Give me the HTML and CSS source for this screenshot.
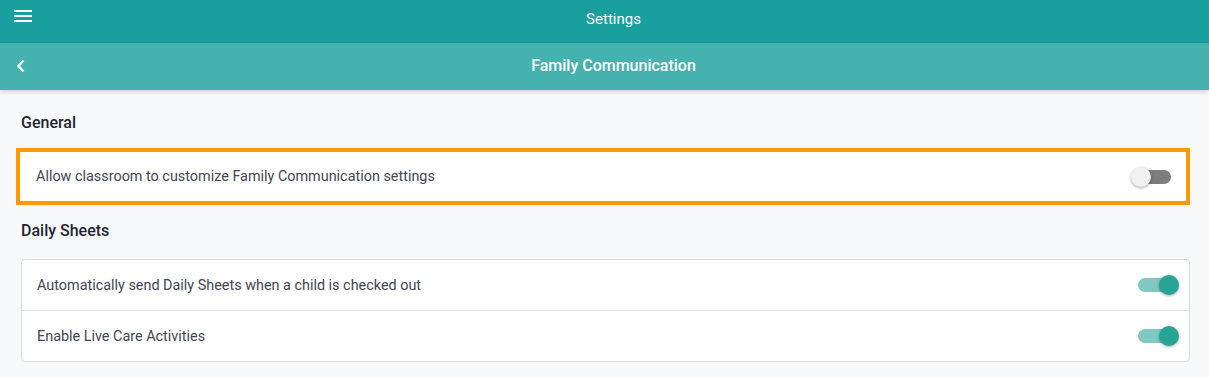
FILE: index.html
```html
<!DOCTYPE html>
<html lang="en">

<head>
  <meta charset="UTF-8">
  <meta name="viewport" content="width=device-width, initial-scale=1.0">
  <title>Settings</title>
  <link rel="stylesheet" href="styles.css">
</head>

<body>
  <header class="topbar">
    <button class="icon-btn menu-btn" aria-label="Menu">
      <svg width="18" height="14" viewBox="0 0 18 14">
        <rect x="0" y="1" width="18" height="2" fill="#fff"/>
        <rect x="0" y="6" width="18" height="2" fill="#fff"/>
        <rect x="0" y="11" width="18" height="2" fill="#fff"/>
      </svg>
    </button>
    <div class="topbar-title">Settings</div>
  </header>

  <div class="subbar">
    <button class="icon-btn back-btn" aria-label="Back">
      <svg width="10" height="14" viewBox="0 0 10 14">
        <path d="M7.5 1.5 L2.5 7 L7.5 12.5" fill="none" stroke="#fff" stroke-width="2.4"/>
      </svg>
    </button>
    <div class="subbar-title">Family Communication</div>
  </div>

  <main class="content">
    <h2 class="section-title">General</h2>
    <div class="card card-highlight">
      <div class="row">
        <span>Allow classroom to customize Family Communication settings</span>
        <span class="toggle"><span class="thumb"></span></span>
      </div>
    </div>

    <h2 class="section-title">Daily Sheets</h2>
    <div class="card card-list">
      <div class="row">
        <span>Automatically send Daily Sheets when a child is checked out</span>
        <span class="toggle on"><span class="thumb"></span></span>
      </div>
      <div class="row">
        <span>Enable Live Care Activities</span>
        <span class="toggle on"><span class="thumb"></span></span>
      </div>
    </div>
  </main>
</body>

</html>
```

FILE: styles.css
```css
body {
  font-family: Roboto, 'Liberation Sans', sans-serif;
  margin: 0;
  background-color: #f8f9fb;
  color: #3f4556;
}

.icon-btn {
  background: none;
  border: none;
  padding: 0;
  cursor: pointer;
  display: flex;
  align-items: center;
}

.topbar {
  height: 43px;
  background-color: #189f9e;
  display: flex;
  align-items: center;
  position: relative;
}

.menu-btn {
  position: absolute;
  left: 14px;
  top: 9px;
}

.topbar-title {
  flex: 1;
  text-align: center;
  color: #fff;
  font-size: 15px;
  padding-left: 18px;
  margin-top: -6px;
}

.subbar {
  height: 47px;
  background-color: #45b2b0;
  display: flex;
  align-items: center;
  position: relative;
  box-shadow: 0 2px 4px rgba(0, 0, 0, 0.15);
}

.back-btn {
  position: absolute;
  left: 16px;
  top: 16px;
}

.subbar-title {
  flex: 1;
  text-align: center;
  color: #fff;
  font-size: 16px;
  font-weight: 500;
  padding-left: 18px;
  margin-top: -2px;
}

.content {
  padding: 23px 19px 0 21px;
}

.section-title {
  font-size: 16px;
  font-weight: 500;
  color: #1f2530;
  margin: 0 0 16px;
  line-height: 19px;
}

.card {
  background-color: #fff;
  border: 1px solid #d9dbe1;
  border-radius: 4px;
  margin-bottom: 16px;
}

.card-list {
  margin-top: 19px;
}

.card-highlight {
  border: 4px solid #ff9900;
  border-radius: 0;
  margin-left: -5px;
}

.card-highlight .row {
  height: 49px;
  padding-left: 16px;
  padding-right: 13px;
}

.row {
  height: 50px;
  display: flex;
  align-items: center;
  justify-content: space-between;
  padding: 0 12px 0 15px;
  font-size: 14.4px;
}

.row + .row {
  border-top: 1px solid #e3e5e9;
}

.toggle {
  position: relative;
  width: 37px;
  height: 14px;
  border-radius: 7px;
  background-color: #7d7d7d;
  margin-right: 2px;
}

.toggle .thumb {
  position: absolute;
  top: -3px;
  left: -3px;
  width: 20px;
  height: 20px;
  border-radius: 50%;
  background-color: #f1f1f1;
  box-shadow: 0 1px 3px rgba(0, 0, 0, 0.35);
}

.toggle.on {
  background-color: #80c8c0;
}

.toggle.on .thumb {
  left: auto;
  right: -4px;
  background-color: #26a595;
}
```
